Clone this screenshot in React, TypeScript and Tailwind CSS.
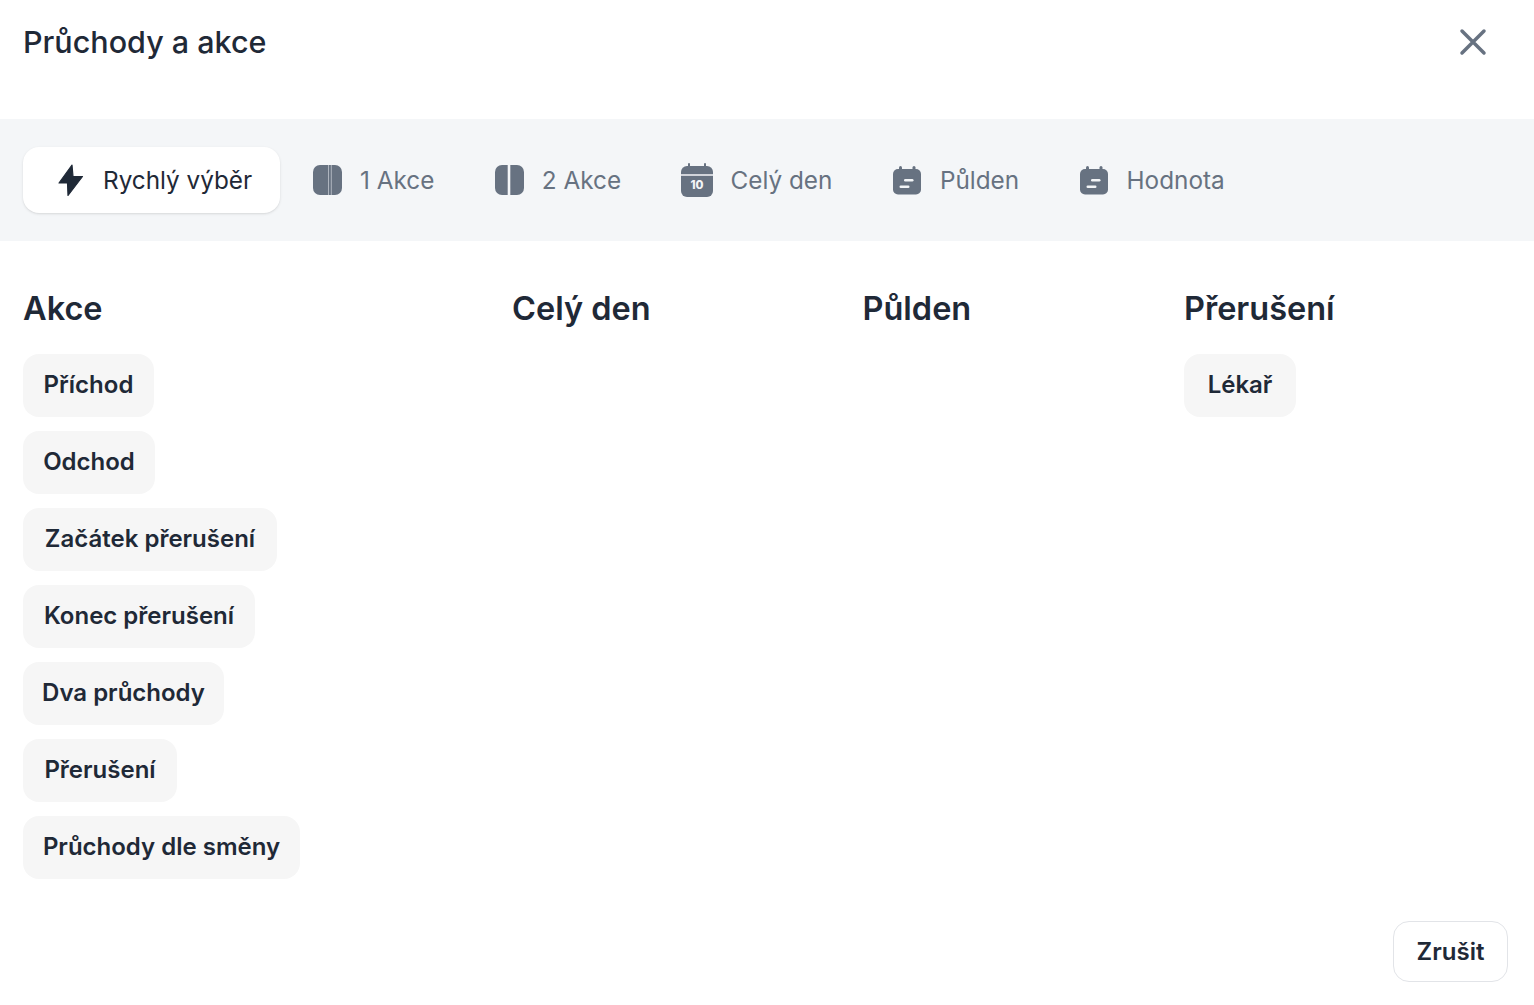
import React from "react";

function BoltIcon() {
  return (
    <svg width="30" height="36" viewBox="0 0 30 36" fill="currentColor" stroke="currentColor" strokeWidth="1.200" strokeLinejoin="round">
      <path d="M16 3 3 21h8.500l.500 12.500L26.500 14.500H17z" />
    </svg>
  );
}

function OneActionIcon() {
  return (
    <svg width="30" height="30" viewBox="0 0 30 30">
      <rect x="1" width="29" height="30" rx="7" fill="#677281" />
      <rect x="16" width="1" height="30" fill="#aeb5bf" />
      <rect x="18.800" width="1" height="30" fill="#aeb5bf" />
    </svg>
  );
}

function TwoActionIcon() {
  return (
    <svg width="30" height="30" viewBox="0 0 30 30" fill="#677281">
      <path d="M13.700 0v30H8a7 7 0 0 1-7-7V7a7 7 0 0 1 7-7z" />
      <path d="M16.300 0H23a7 7 0 0 1 7 7v16a7 7 0 0 1-7 7h-6.700z" />
    </svg>
  );
}

function FullDayIcon() {
  return (
    <svg width="32" height="34" viewBox="0 0 32 34" fill="#677281">
      <rect x="7" y="0" width="2" height="6" rx="1" />
      <rect x="23" y="0" width="2" height="6" rx="1" />
      <path d="M6 3h20a6 6 0 0 1 6 6v2.300H0V9a6 6 0 0 1 6-6z" />
      <path d="M0 12.800h32V28a6 6 0 0 1-6 6H6a6 6 0 0 1-6-6z" />
      <text x="16" y="26" textAnchor="middle" fontSize="11.500" fontWeight="800" fill="#f3f5f7" fontFamily="Inter, sans-serif">10</text>
    </svg>
  );
}

function HalfDayIcon() {
  return (
    <svg width="30" height="30" viewBox="0 0 30 30" fill="#677281">
      <rect x="7" y="1" width="3" height="6" rx="1.500" />
      <rect x="20.500" y="1" width="3" height="6" rx="1.500" />
      <rect x="1" y="4" width="28" height="25.500" rx="5" />
      <rect x="12" y="14" width="9.500" height="2.500" rx="1.250" fill="#f3f5f7" />
      <rect x="7.500" y="20.500" width="10" height="2.500" rx="1.250" fill="#f3f5f7" />
    </svg>
  );
}

function Tab({ icon, label }: { icon: React.ReactNode; label: string }) {
  return (
    <div className="flex items-center gap-[18px] text-[24.300px] text-[#677281]">
      {icon}
      <span className="pt-[1px]">{label}</span>
    </div>
  );
}

function Chip({ label, width }: { label: string; width: string }) {
  return (
    <button className={`h-[63px] rounded-[16px] bg-[#f6f6f6] pb-[2px] text-center text-[24px] font-semibold text-[#1f2937] ${width}`}>
      {label}
    </button>
  );
}

function Column({ title, className, children }: { title: string; className: string; children?: React.ReactNode }) {
  return (
    <div className={className}>
      <h2 className="mb-[22px] h-[46px] text-[32.500px] leading-[46px] font-semibold text-[#1f2937]">{title}</h2>
      <div className="flex flex-col items-start gap-[14px]">{children}</div>
    </div>
  );
}

export default function App() {
  return (
    <div className="flex h-[1005px] flex-col bg-white font-['Inter',sans-serif]">
      {/* Header */}
      <div className="flex h-[119px] items-start justify-between pt-[22px] pr-[46px] pl-[23px]">
        <h1 className="text-[30.500px] leading-[40px] font-medium text-[#1f2937]">Průchody a akce</h1>
        <svg width="30" height="30" viewBox="0 0 30 30" className="mt-[5px]" fill="none" stroke="#677281" strokeWidth="3.500" strokeLinecap="round">
          <path d="M4 4l22 22M26 4 4 26" />
        </svg>
      </div>

      {/* Tabs */}
      <div className="flex h-[122px] items-center bg-[#f4f6f8] pl-[23px]">
        <div className="mr-[32px] flex h-[66px] w-[257px] items-center gap-[17px] rounded-[16px] bg-white pl-[33px] text-[24.300px] text-[#1f2937] shadow-sm">
          <BoltIcon />
          <span className="pt-[1px]">Rychlý výběr</span>
        </div>
        <div className="flex items-center gap-[59.500px]">
          <Tab icon={<OneActionIcon />} label="1 Akce" />
          <Tab icon={<TwoActionIcon />} label="2 Akce" />
          <Tab icon={<FullDayIcon />} label="Celý den" />
          <Tab icon={<HalfDayIcon />} label="Půlden" />
          <Tab icon={<HalfDayIcon />} label="Hodnota" />
        </div>
      </div>

      {/* Columns */}
      <div className="flex flex-1 pt-[45px] pl-[23px]">
        <Column title="Akce" className="w-[489px]">
          <Chip label="Příchod" width="w-[131px]" />
          <Chip label="Odchod" width="w-[132px]" />
          <Chip label="Začátek přerušení" width="w-[254px]" />
          <Chip label="Konec přerušení" width="w-[232px]" />
          <Chip label="Dva průchody" width="w-[201px]" />
          <Chip label="Přerušení" width="w-[154px]" />
          <Chip label="Průchody dle směny" width="w-[277px]" />
        </Column>
        <Column title="Celý den" className="w-[350.500px]" />
        <Column title="Půlden" className="w-[321.500px]" />
        <Column title="Přerušení" className="w-[300px]">
          <Chip label="Lékař" width="w-[112px]" />
        </Column>
      </div>

      {/* Footer */}
      <div className="flex justify-end pr-[26px] pb-[23px]">
        <button className="h-[61px] w-[115px] rounded-[16px] border border-[#e2e4e8] text-[24px] font-semibold text-[#1f2937]">
          Zrušit
        </button>
      </div>
    </div>
  );
}
